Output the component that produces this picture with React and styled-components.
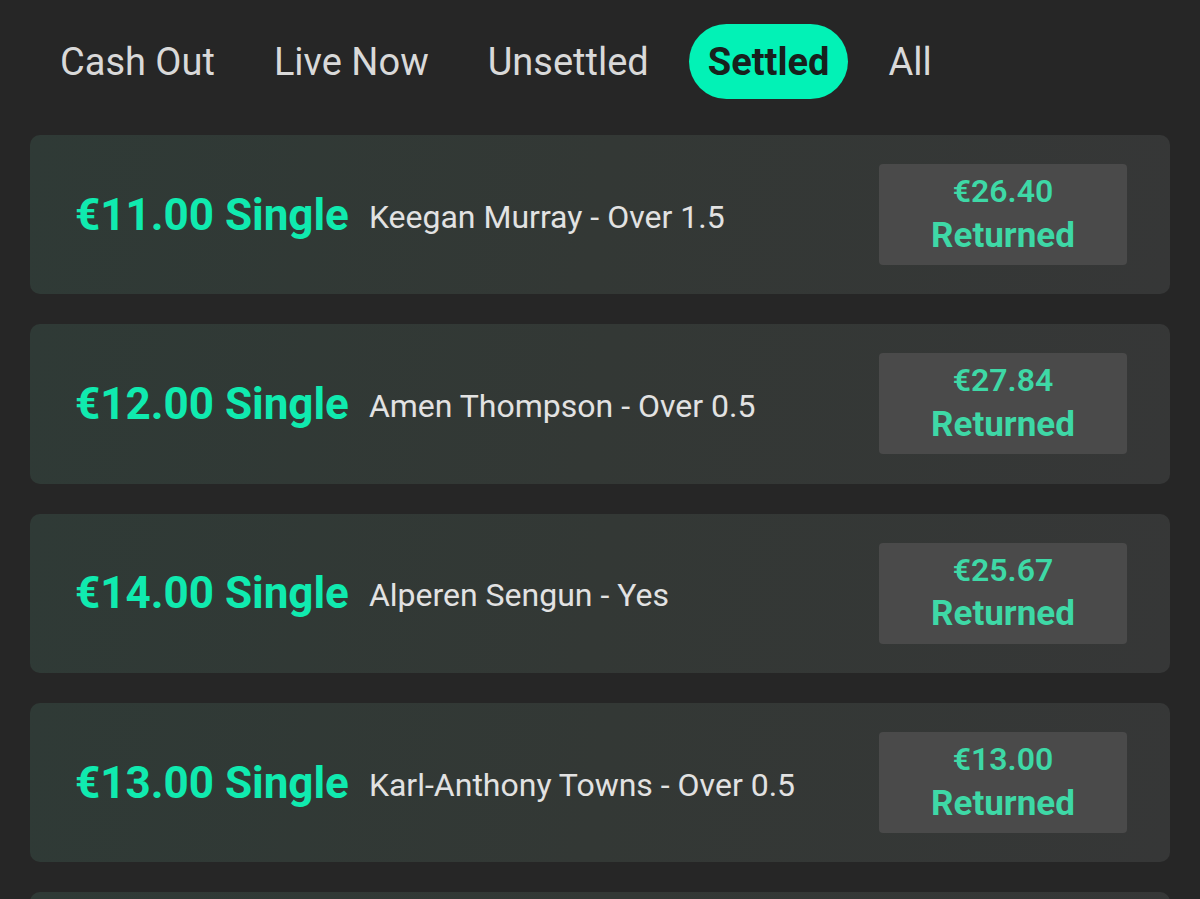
import styled, { createGlobalStyle } from 'styled-components'

const GlobalStyle = createGlobalStyle`
    html, body {
        margin: 0;
        padding: 0;
        background: #262626;
        font-family: Roboto, "Liberation Sans", sans-serif;
    }
`

const tabs = ['Cash Out', 'Live Now', 'Unsettled', 'Settled', 'All']

const bets = [
    { stake: '€11.00', pick: 'Keegan Murray - Over 1.5', returned: '€26.40' },
    { stake: '€12.00', pick: 'Amen Thompson - Over 0.5', returned: '€27.84' },
    { stake: '€14.00', pick: 'Alperen Sengun - Yes', returned: '€25.67' },
    { stake: '€13.00', pick: 'Karl-Anthony Towns - Over 0.5', returned: '€13.00' },
]

const App = () => {
    return (
        <Page>
            <GlobalStyle />
            <Tabs>
                {tabs.map((t) => (
                    <Tab key={t} active={t === 'Settled'}>{t}</Tab>
                ))}
            </Tabs>
            <List>
                {bets.map((b) => (
                    <Card key={b.pick}>
                        <Stake>{b.stake} Single</Stake>
                        <Pick>{b.pick}</Pick>
                        <Returned>
                            <Amount>{b.returned}</Amount>
                            <Label>Returned</Label>
                        </Returned>
                    </Card>
                ))}
                {/* next card peeks in below the fold */}
                <Card />
            </List>
        </Page>
    )
}

const Page = styled.div`
    width: 1200px;
    height: 899px;
    overflow: hidden;
    background: #262626;
`
const Tabs = styled.nav`
    display: flex;
    align-items: center;
    gap: 21px;
    padding: 24px 0 0 41px;
`
const Tab = styled.div.withConfig({ shouldForwardProp: (p) => p !== 'active' })`
    height: 75px;
    display: flex;
    align-items: center;
    padding: 0 19px;
    border-radius: 38px;
    font-size: 38px;
    font-weight: ${(p) => (p.active ? 700 : 400)};
    color: ${(p) => (p.active ? '#17211d' : '#d9d9d9')};
    background: ${(p) => (p.active ? '#02f2b6' : 'transparent')};
`
const List = styled.div`
    display: flex;
    flex-direction: column;
    gap: 30px;
    padding: 36px 30px 0;
`
const Card = styled.div`
    flex-shrink: 0;
    height: 159.3px;
    display: flex;
    align-items: center;
    padding: 0 43px 0 45px;
    border-radius: 10px;
    background: linear-gradient(100deg, #2f3a36 0%, #333835 50%, #363737 100%);
`
const Stake = styled.div`
    font-size: 44px;
    font-weight: 700;
    color: #10eaaf;
    white-space: nowrap;
`
const Pick = styled.div`
    flex: 1;
    margin-left: 20px;
    padding-top: 4px;
    font-size: 32px;
    color: #e2e2e2;
    white-space: nowrap;
`
const Returned = styled.div`
    width: 248px;
    height: 101px;
    display: flex;
    flex-direction: column;
    align-items: center;
    justify-content: center;
    border-radius: 4px;
    background: #4a4a4a;
    color: #3ed8a6;
    font-weight: 700;
    line-height: 1.3;
`
const Amount = styled.div`
    font-size: 32px;
    font-weight: 600;
`
const Label = styled.div`
    font-size: 35px;
`

export default App
